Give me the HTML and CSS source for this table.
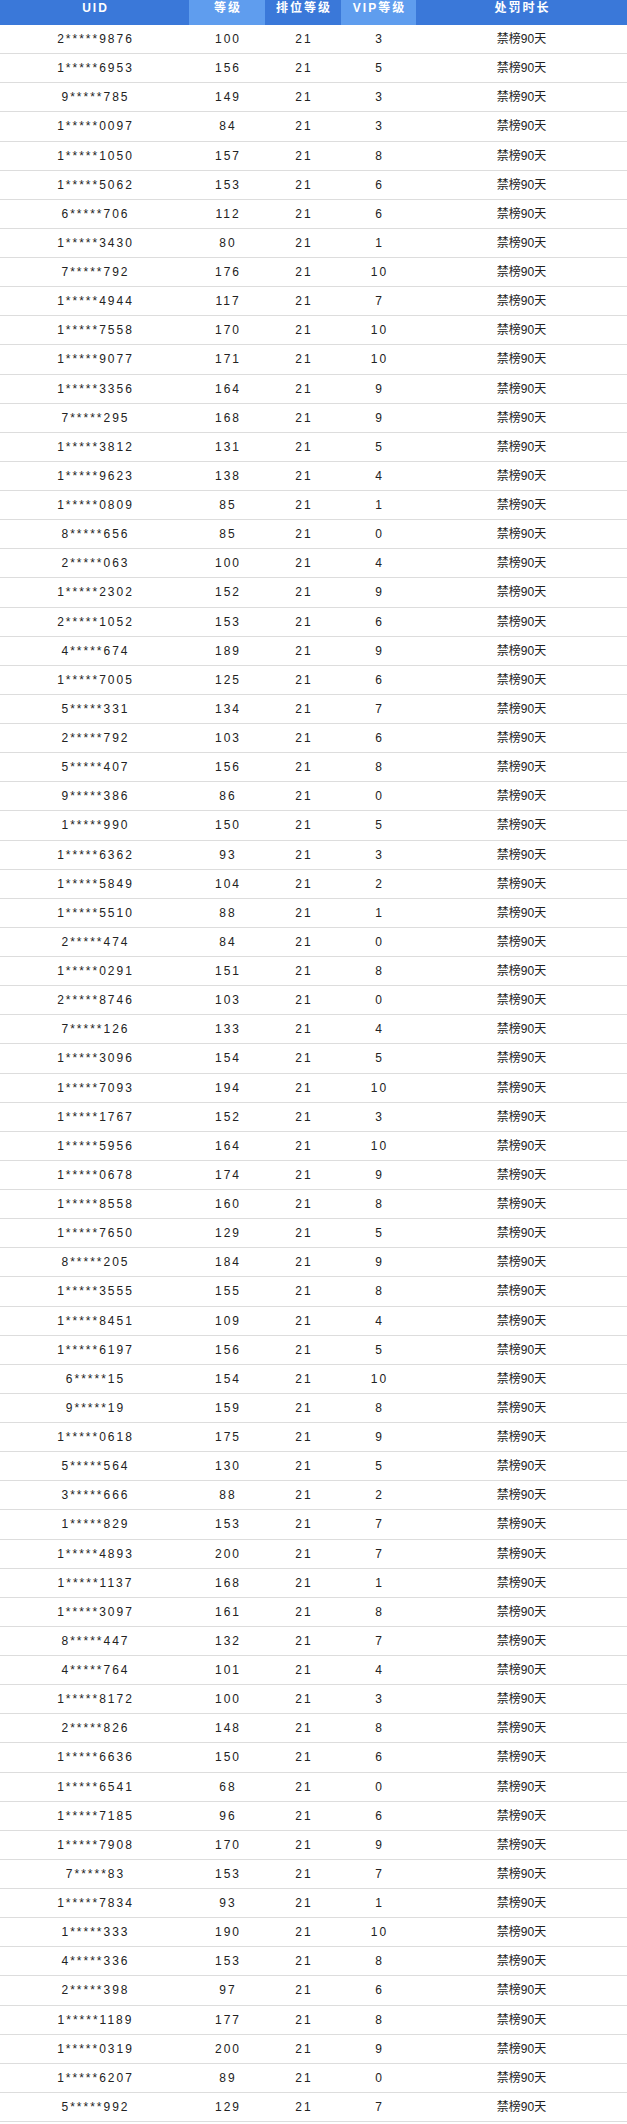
FILE: index.html
```html
<!DOCTYPE html>
<html lang="zh">
<head>
<meta charset="utf-8">
<title>处罚名单</title>
<link rel="stylesheet" href="styles.css">
</head>
<body>
<div class="table">
  <div class="head">
    <div class="th dark">UID</div>
    <div class="th light">等级</div>
    <div class="th dark">排位等级</div>
    <div class="th light">VIP等级</div>
    <div class="th dark">处罚时长</div>
  </div>
  <div class="row"><div class="td">2*****9876</div><div class="td">100</div><div class="td">21</div><div class="td">3</div><div class="td ban">禁榜90天</div></div>
  <div class="row"><div class="td">1*****6953</div><div class="td">156</div><div class="td">21</div><div class="td">5</div><div class="td ban">禁榜90天</div></div>
  <div class="row"><div class="td">9*****785</div><div class="td">149</div><div class="td">21</div><div class="td">3</div><div class="td ban">禁榜90天</div></div>
  <div class="row"><div class="td">1*****0097</div><div class="td">84</div><div class="td">21</div><div class="td">3</div><div class="td ban">禁榜90天</div></div>
  <div class="row"><div class="td">1*****1050</div><div class="td">157</div><div class="td">21</div><div class="td">8</div><div class="td ban">禁榜90天</div></div>
  <div class="row"><div class="td">1*****5062</div><div class="td">153</div><div class="td">21</div><div class="td">6</div><div class="td ban">禁榜90天</div></div>
  <div class="row"><div class="td">6*****706</div><div class="td">112</div><div class="td">21</div><div class="td">6</div><div class="td ban">禁榜90天</div></div>
  <div class="row"><div class="td">1*****3430</div><div class="td">80</div><div class="td">21</div><div class="td">1</div><div class="td ban">禁榜90天</div></div>
  <div class="row"><div class="td">7*****792</div><div class="td">176</div><div class="td">21</div><div class="td">10</div><div class="td ban">禁榜90天</div></div>
  <div class="row"><div class="td">1*****4944</div><div class="td">117</div><div class="td">21</div><div class="td">7</div><div class="td ban">禁榜90天</div></div>
  <div class="row"><div class="td">1*****7558</div><div class="td">170</div><div class="td">21</div><div class="td">10</div><div class="td ban">禁榜90天</div></div>
  <div class="row"><div class="td">1*****9077</div><div class="td">171</div><div class="td">21</div><div class="td">10</div><div class="td ban">禁榜90天</div></div>
  <div class="row"><div class="td">1*****3356</div><div class="td">164</div><div class="td">21</div><div class="td">9</div><div class="td ban">禁榜90天</div></div>
  <div class="row"><div class="td">7*****295</div><div class="td">168</div><div class="td">21</div><div class="td">9</div><div class="td ban">禁榜90天</div></div>
  <div class="row"><div class="td">1*****3812</div><div class="td">131</div><div class="td">21</div><div class="td">5</div><div class="td ban">禁榜90天</div></div>
  <div class="row"><div class="td">1*****9623</div><div class="td">138</div><div class="td">21</div><div class="td">4</div><div class="td ban">禁榜90天</div></div>
  <div class="row"><div class="td">1*****0809</div><div class="td">85</div><div class="td">21</div><div class="td">1</div><div class="td ban">禁榜90天</div></div>
  <div class="row"><div class="td">8*****656</div><div class="td">85</div><div class="td">21</div><div class="td">0</div><div class="td ban">禁榜90天</div></div>
  <div class="row"><div class="td">2*****063</div><div class="td">100</div><div class="td">21</div><div class="td">4</div><div class="td ban">禁榜90天</div></div>
  <div class="row"><div class="td">1*****2302</div><div class="td">152</div><div class="td">21</div><div class="td">9</div><div class="td ban">禁榜90天</div></div>
  <div class="row"><div class="td">2*****1052</div><div class="td">153</div><div class="td">21</div><div class="td">6</div><div class="td ban">禁榜90天</div></div>
  <div class="row"><div class="td">4*****674</div><div class="td">189</div><div class="td">21</div><div class="td">9</div><div class="td ban">禁榜90天</div></div>
  <div class="row"><div class="td">1*****7005</div><div class="td">125</div><div class="td">21</div><div class="td">6</div><div class="td ban">禁榜90天</div></div>
  <div class="row"><div class="td">5*****331</div><div class="td">134</div><div class="td">21</div><div class="td">7</div><div class="td ban">禁榜90天</div></div>
  <div class="row"><div class="td">2*****792</div><div class="td">103</div><div class="td">21</div><div class="td">6</div><div class="td ban">禁榜90天</div></div>
  <div class="row"><div class="td">5*****407</div><div class="td">156</div><div class="td">21</div><div class="td">8</div><div class="td ban">禁榜90天</div></div>
  <div class="row"><div class="td">9*****386</div><div class="td">86</div><div class="td">21</div><div class="td">0</div><div class="td ban">禁榜90天</div></div>
  <div class="row"><div class="td">1*****990</div><div class="td">150</div><div class="td">21</div><div class="td">5</div><div class="td ban">禁榜90天</div></div>
  <div class="row"><div class="td">1*****6362</div><div class="td">93</div><div class="td">21</div><div class="td">3</div><div class="td ban">禁榜90天</div></div>
  <div class="row"><div class="td">1*****5849</div><div class="td">104</div><div class="td">21</div><div class="td">2</div><div class="td ban">禁榜90天</div></div>
  <div class="row"><div class="td">1*****5510</div><div class="td">88</div><div class="td">21</div><div class="td">1</div><div class="td ban">禁榜90天</div></div>
  <div class="row"><div class="td">2*****474</div><div class="td">84</div><div class="td">21</div><div class="td">0</div><div class="td ban">禁榜90天</div></div>
  <div class="row"><div class="td">1*****0291</div><div class="td">151</div><div class="td">21</div><div class="td">8</div><div class="td ban">禁榜90天</div></div>
  <div class="row"><div class="td">2*****8746</div><div class="td">103</div><div class="td">21</div><div class="td">0</div><div class="td ban">禁榜90天</div></div>
  <div class="row"><div class="td">7*****126</div><div class="td">133</div><div class="td">21</div><div class="td">4</div><div class="td ban">禁榜90天</div></div>
  <div class="row"><div class="td">1*****3096</div><div class="td">154</div><div class="td">21</div><div class="td">5</div><div class="td ban">禁榜90天</div></div>
  <div class="row"><div class="td">1*****7093</div><div class="td">194</div><div class="td">21</div><div class="td">10</div><div class="td ban">禁榜90天</div></div>
  <div class="row"><div class="td">1*****1767</div><div class="td">152</div><div class="td">21</div><div class="td">3</div><div class="td ban">禁榜90天</div></div>
  <div class="row"><div class="td">1*****5956</div><div class="td">164</div><div class="td">21</div><div class="td">10</div><div class="td ban">禁榜90天</div></div>
  <div class="row"><div class="td">1*****0678</div><div class="td">174</div><div class="td">21</div><div class="td">9</div><div class="td ban">禁榜90天</div></div>
  <div class="row"><div class="td">1*****8558</div><div class="td">160</div><div class="td">21</div><div class="td">8</div><div class="td ban">禁榜90天</div></div>
  <div class="row"><div class="td">1*****7650</div><div class="td">129</div><div class="td">21</div><div class="td">5</div><div class="td ban">禁榜90天</div></div>
  <div class="row"><div class="td">8*****205</div><div class="td">184</div><div class="td">21</div><div class="td">9</div><div class="td ban">禁榜90天</div></div>
  <div class="row"><div class="td">1*****3555</div><div class="td">155</div><div class="td">21</div><div class="td">8</div><div class="td ban">禁榜90天</div></div>
  <div class="row"><div class="td">1*****8451</div><div class="td">109</div><div class="td">21</div><div class="td">4</div><div class="td ban">禁榜90天</div></div>
  <div class="row"><div class="td">1*****6197</div><div class="td">156</div><div class="td">21</div><div class="td">5</div><div class="td ban">禁榜90天</div></div>
  <div class="row"><div class="td">6*****15</div><div class="td">154</div><div class="td">21</div><div class="td">10</div><div class="td ban">禁榜90天</div></div>
  <div class="row"><div class="td">9*****19</div><div class="td">159</div><div class="td">21</div><div class="td">8</div><div class="td ban">禁榜90天</div></div>
  <div class="row"><div class="td">1*****0618</div><div class="td">175</div><div class="td">21</div><div class="td">9</div><div class="td ban">禁榜90天</div></div>
  <div class="row"><div class="td">5*****564</div><div class="td">130</div><div class="td">21</div><div class="td">5</div><div class="td ban">禁榜90天</div></div>
  <div class="row"><div class="td">3*****666</div><div class="td">88</div><div class="td">21</div><div class="td">2</div><div class="td ban">禁榜90天</div></div>
  <div class="row"><div class="td">1*****829</div><div class="td">153</div><div class="td">21</div><div class="td">7</div><div class="td ban">禁榜90天</div></div>
  <div class="row"><div class="td">1*****4893</div><div class="td">200</div><div class="td">21</div><div class="td">7</div><div class="td ban">禁榜90天</div></div>
  <div class="row"><div class="td">1*****1137</div><div class="td">168</div><div class="td">21</div><div class="td">1</div><div class="td ban">禁榜90天</div></div>
  <div class="row"><div class="td">1*****3097</div><div class="td">161</div><div class="td">21</div><div class="td">8</div><div class="td ban">禁榜90天</div></div>
  <div class="row"><div class="td">8*****447</div><div class="td">132</div><div class="td">21</div><div class="td">7</div><div class="td ban">禁榜90天</div></div>
  <div class="row"><div class="td">4*****764</div><div class="td">101</div><div class="td">21</div><div class="td">4</div><div class="td ban">禁榜90天</div></div>
  <div class="row"><div class="td">1*****8172</div><div class="td">100</div><div class="td">21</div><div class="td">3</div><div class="td ban">禁榜90天</div></div>
  <div class="row"><div class="td">2*****826</div><div class="td">148</div><div class="td">21</div><div class="td">8</div><div class="td ban">禁榜90天</div></div>
  <div class="row"><div class="td">1*****6636</div><div class="td">150</div><div class="td">21</div><div class="td">6</div><div class="td ban">禁榜90天</div></div>
  <div class="row"><div class="td">1*****6541</div><div class="td">68</div><div class="td">21</div><div class="td">0</div><div class="td ban">禁榜90天</div></div>
  <div class="row"><div class="td">1*****7185</div><div class="td">96</div><div class="td">21</div><div class="td">6</div><div class="td ban">禁榜90天</div></div>
  <div class="row"><div class="td">1*****7908</div><div class="td">170</div><div class="td">21</div><div class="td">9</div><div class="td ban">禁榜90天</div></div>
  <div class="row"><div class="td">7*****83</div><div class="td">153</div><div class="td">21</div><div class="td">7</div><div class="td ban">禁榜90天</div></div>
  <div class="row"><div class="td">1*****7834</div><div class="td">93</div><div class="td">21</div><div class="td">1</div><div class="td ban">禁榜90天</div></div>
  <div class="row"><div class="td">1*****333</div><div class="td">190</div><div class="td">21</div><div class="td">10</div><div class="td ban">禁榜90天</div></div>
  <div class="row"><div class="td">4*****336</div><div class="td">153</div><div class="td">21</div><div class="td">8</div><div class="td ban">禁榜90天</div></div>
  <div class="row"><div class="td">2*****398</div><div class="td">97</div><div class="td">21</div><div class="td">6</div><div class="td ban">禁榜90天</div></div>
  <div class="row"><div class="td">1*****1189</div><div class="td">177</div><div class="td">21</div><div class="td">8</div><div class="td ban">禁榜90天</div></div>
  <div class="row"><div class="td">1*****0319</div><div class="td">200</div><div class="td">21</div><div class="td">9</div><div class="td ban">禁榜90天</div></div>
  <div class="row"><div class="td">1*****6207</div><div class="td">89</div><div class="td">21</div><div class="td">0</div><div class="td ban">禁榜90天</div></div>
  <div class="row"><div class="td">5*****992</div><div class="td">129</div><div class="td">21</div><div class="td">7</div><div class="td ban">禁榜90天</div></div>
</div>
</body>
</html>
```

FILE: styles.css
```css
html, body {
  margin: 0;
  padding: 0;
  background: #ffffff;
}

body {
  font-family: "Liberation Sans", "Noto Sans CJK SC", sans-serif;
  font-size: 12px;
  color: #222222;
}

.table {
  width: 627px;
}

.head,
.row {
  display: grid;
  grid-template-columns: 189px 76px 76px 75px 1fr;
}

.head {
  height: 25px;
}

.th {
  color: #ffffff;
  font-weight: bold;
  text-align: center;
  letter-spacing: 2px;
  line-height: 17px;
  padding-left: 2px;
}

.th.dark {
  background: #3a78d9;
}

.th.light {
  background: #5f9dee;
}

.row {
  height: 29.125px;
  box-sizing: border-box;
  border-bottom: 1px solid #dddddd;
  align-items: center;
}

.td {
  text-align: center;
  letter-spacing: 2px;
  padding-left: 2px;
  line-height: 16px;
}

.td.ban {
  letter-spacing: 0;
  padding-left: 0;
}
```
